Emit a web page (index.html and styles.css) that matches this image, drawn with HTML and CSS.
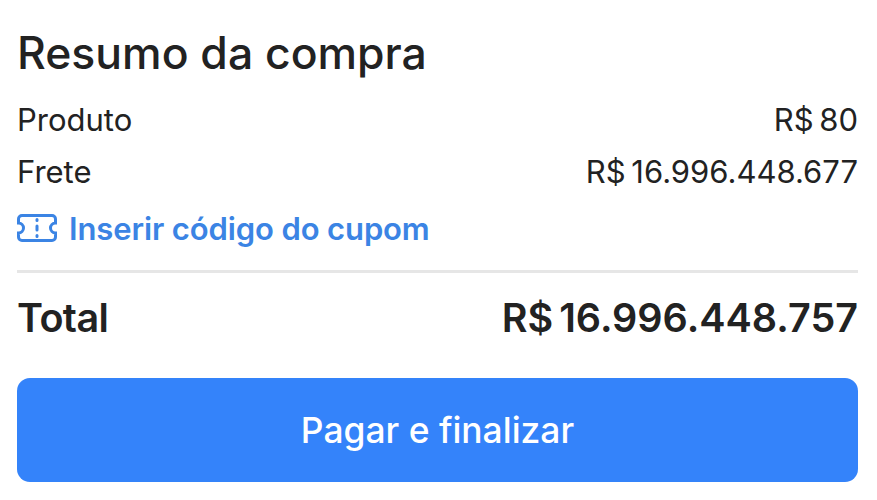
FILE: index.html
```html
<!DOCTYPE html>
<html lang="pt-BR">
<head>
    <meta charset="UTF-8">
    <title>Resumo da compra</title>
    <link rel="stylesheet" href="styles.css">
</head>
<body>
    <h1 class="title">Resumo da compra</h1>
    <div class="row first"><span>Produto</span><span class="money">R$ 80</span></div>
    <div class="row"><span>Frete</span><span class="money">R$ 16.996.448.677</span></div>
    <a class="coupon" href="#">
        <svg width="40" height="28" viewBox="0 0 40 28" fill="none" stroke="#3b84e4" stroke-width="3" stroke-linecap="round">
            <path d="M5 1.5h30a3.5 3.5 0 0 1 3.500 3.500v4a5 5 0 0 0 0 10v4a3.500 3.500 0 0 1-3.500 3.500H5a3.500 3.500 0 0 1-3.500-3.500v-4a5 5 0 0 0 0-10V5A3.500 3.500 0 0 1 5 1.500z"/>
            <path d="M20 5.500v1M20 12v4M20 21.500v1"/>
        </svg>
        Inserir código do cupom
    </a>
    <hr class="line">
    <div class="total"><span class="total-label">Total</span><span class="money-big">R$ 16.996.448.757</span></div>
    <button class="pay">Pagar e finalizar</button>
</body>
</html>
```

FILE: styles.css
```css
body {
    margin: 0;
    padding: 0 19px 0 17px;
    font-family: "Inter", "Liberation Sans", sans-serif;
    color: #222;
    background: #fff;
}
.title {
    margin: 0;
    padding-top: 25px;
    font-size: 44.5px;
    line-height: 56px;
    font-weight: 500;
}
.row {
    display: flex;
    justify-content: space-between;
    font-size: 31px;
    line-height: 52px;
}
.first {
    margin-top: 13px;
}
.money {
    word-spacing: -3px;
}
.coupon {
    display: flex;
    align-items: center;
    gap: 12px;
    height: 60px;
    font-size: 31px;
    font-weight: 600;
    letter-spacing: -0.12px;
    color: #3b84e4;
    text-decoration: none;
}
.line {
    margin: 12px 0 0;
    border: none;
    border-top: 3px solid #e6e6e6;
}
.total {
    display: flex;
    justify-content: space-between;
    margin-top: 20px;
    font-size: 39.5px;
    line-height: 50px;
    font-weight: 600;
}
.total-label {
    letter-spacing: -0.6px;
}
.money-big {
    word-spacing: -4px;
}
.pay {
    display: block;
    width: 100%;
    height: 104px;
    margin-top: 35px;
    background: #3483fa;
    color: #fff;
    border: none;
    border-radius: 13px;
    font-family: inherit;
    font-size: 35.4px;
    font-weight: 500;
}
```
